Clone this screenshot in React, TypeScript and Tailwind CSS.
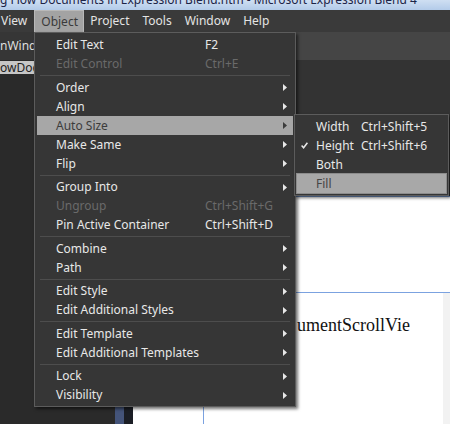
import React from 'react';

type Item =
  | 'sep'
  | {
      label: string;
      shortcut?: string;
      sub?: boolean;
      disabled?: boolean;
      active?: boolean;
    };

const objectMenu: Item[] = [
  { label: 'Edit Text', shortcut: 'F2' },
  { label: 'Edit Control', shortcut: 'Ctrl+E', disabled: true },
  'sep',
  { label: 'Order', sub: true },
  { label: 'Align', sub: true },
  { label: 'Auto Size', sub: true, active: true },
  { label: 'Make Same', sub: true },
  { label: 'Flip', sub: true },
  'sep',
  { label: 'Group Into', sub: true },
  { label: 'Ungroup', shortcut: 'Ctrl+Shift+G', disabled: true },
  { label: 'Pin Active Container', shortcut: 'Ctrl+Shift+D' },
  'sep',
  { label: 'Combine', sub: true },
  { label: 'Path', sub: true },
  'sep',
  { label: 'Edit Style', sub: true },
  { label: 'Edit Additional Styles', sub: true },
  'sep',
  { label: 'Edit Template', sub: true },
  { label: 'Edit Additional Templates', sub: true },
  'sep',
  { label: 'Lock', sub: true },
  { label: 'Visibility', sub: true },
];

const autoSizeMenu = [
  { label: 'Width', shortcut: 'Ctrl+Shift+5' },
  { label: 'Height', shortcut: 'Ctrl+Shift+6', checked: true },
  { label: 'Both' },
  { label: 'Fill', active: true },
];

const Arrow = () => (
  <svg width="4" height="7" viewBox="0 0 4 7" className="mr-[6px] shrink-0">
    <path d="M0 0L4 3.5L0 7Z" fill="currentColor" />
  </svg>
);

const Check = () => (
  <svg width="7" height="7" viewBox="0 0 7 7" className="ml-[4px]">
    <path d="M0.6 3.6L2.6 5.8L6.4 0.8" stroke="currentColor" strokeWidth="1.5" fill="none" />
  </svg>
);

const App = () => {
  return (
    <div className="relative w-[450px] h-[424px] overflow-hidden bg-[#2a2a2a] font-['Noto_Sans',sans-serif] text-[12px]">
      {/* Window title */}
      <div className="h-[10px] overflow-hidden bg-gradient-to-b from-[#cfdff2] to-[#b3cbe9]">
        <div className="-mt-[6px] leading-[12px] text-[12px] text-[#1c2447] whitespace-nowrap">
          g Flow Documents in Expression Blend.htm - Microsoft Expression Blend 4
        </div>
      </div>

      {/* Menu bar */}
      <div className="h-[22px] flex items-stretch bg-[#3a3a3a] text-[#e4e4e4]">
        <div className="flex items-center -ml-[6px] px-[7px]">View</div>
        <div className="flex items-center px-[6px] bg-[#a3a3a3] text-[#3a3a3a] border-t border-x border-[#b9b9b9] w-[50px]">
          Object
        </div>
        <div className="flex items-center pl-[6px] pr-[6px]">Project</div>
        <div className="flex items-center px-[7px]">Tools</div>
        <div className="flex items-center px-[6px]">Window</div>
        <div className="flex items-center px-[7px]">Help</div>
      </div>

      {/* Document tab strip */}
      <div className="h-[28px] flex bg-[#454545]">
        <div className="w-[280px] flex items-center bg-[#363636] border-r border-[#4c4c4c]">
          <span className="w-[34px] overflow-hidden whitespace-nowrap text-[#dedede]">nWind</span>
        </div>
        <div className="w-[16px] border border-[#6a6a6a] bg-[#3e3e3e]" />
        <div className="flex-1" />
      </div>

      {/* Workspace */}
      <div className="flex h-[364px]">
        <div className="w-[115px] flex flex-col bg-[#2a2a2a]">
          <div className="h-[13px] mt-[1px] bg-[#c6c6c6] leading-[13px]">
            <span className="block w-[34px] overflow-hidden whitespace-nowrap text-[#222]">owDoc</span>
          </div>
          <div className="flex-1" />
        </div>
        <div className="w-[9px] bg-[#44547a]" />
        <div className="w-[9px] bg-[#1b1e25]" />
        <div className="flex-1 flex flex-col">
          <div className="h-[136px] bg-[#333333]" />
          <div className="flex-1 flex flex-col bg-white border-t border-[#7b9fd9]">
            <div className="h-[95px]" />
            <div className="flex-1 flex border-t border-[#7ba2e0]">
              <div className="relative flex-1">
                <div className="absolute left-[70px] top-0 bottom-0 w-px bg-[#7ba2e0]" />
                <div className="pl-[164px] pt-[21px] font-['Liberation_Serif',serif] text-[18px] leading-[22px] text-[#111] whitespace-nowrap">
                  umentScrollVie
                </div>
              </div>
              <div className="w-[7px] bg-[#f2f2f2]" />
            </div>
          </div>
        </div>
      </div>

      {/* Object menu */}
      <div className="absolute left-[34px] top-[32px] w-[262px] border border-[#5c5c5c] bg-[#363636] px-[2px] pt-[2.5px] pb-[1.5px] shadow-[2px_2px_3px_rgba(0,0,0,0.55)]">
        {objectMenu.map((item, i) =>
          item === 'sep' ? (
            <div key={i} className="h-[4.5px] flex items-center px-[3px]">
              <div className="h-px w-full bg-[#4d4d4d]" />
            </div>
          ) : (
            <div
              key={i}
              className={`h-[19px] flex items-center pl-[19px] whitespace-nowrap ${
                item.active
                  ? 'bg-[#a7a7a7] text-[#3c3c3c]'
                  : item.disabled
                  ? 'text-[#6a6a6a]'
                  : 'text-[#e8e8e8]'
              }`}
            >
              <span className="w-[149px] shrink-0">{item.label}</span>
              <span className="flex-1">{item.shortcut}</span>
              {item.sub && <Arrow />}
            </div>
          )
        )}
      </div>

      {/* Auto Size submenu */}
      <div className="absolute left-[294px] top-[114px] w-[155px] border border-[#5c5c5c] bg-[#363636] px-[2px] pt-[2px] pb-[2px] shadow-[2px_2px_3px_rgba(0,0,0,0.55)]">
        {autoSizeMenu.map((item) => (
          <div
            key={item.label}
            className={`h-[19px] flex items-center whitespace-nowrap ${
              item.active ? 'bg-[#a8a8a8] text-[#454545] outline outline-1 outline-[#8c8c8c]' : 'text-[#e8e8e8]'
            }`}
          >
            <span className="w-[19px] shrink-0 flex items-center">{item.checked && <Check />}</span>
            <span className="w-[45px] shrink-0">{item.label}</span>
            <span>{item.shortcut}</span>
          </div>
        ))}
      </div>
    </div>
  );
};

export default App;
